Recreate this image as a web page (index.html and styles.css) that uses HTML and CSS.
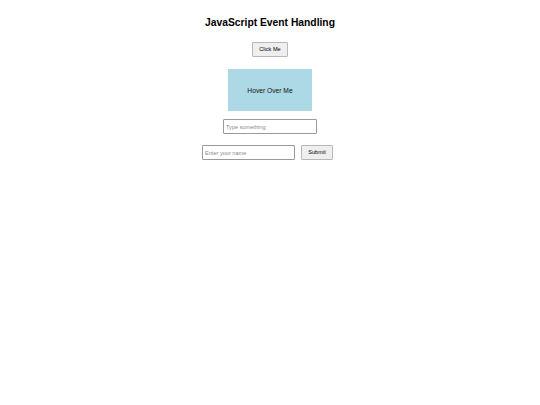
FILE: index.html
```html
<!DOCTYPE html>
<html lang="en">
<head>
<meta charset="utf-8">
<title>JavaScript Event Handling</title>
<link rel="stylesheet" href="styles.css">
</head>
<body>
<main class="page">
  <h1 class="title">JavaScript Event Handling</h1>
  <button class="btn btn-click" type="button">Click Me</button>
  <div class="hover-box">Hover Over Me</div>
  <input class="field field-type" type="text" placeholder="Type something">
  <form class="name-form">
    <input class="field field-name" type="text" placeholder="Enter your name">
    <button class="btn btn-submit" type="submit">Submit</button>
  </form>
</main>
</body>
</html>
```

FILE: styles.css
```css
html, body {
  margin: 0;
  padding: 0;
  background: #ffffff;
}

body {
  font-family: "Liberation Sans", Arial, sans-serif;
  color: #000;
}

.page {
  display: flex;
  flex-direction: column;
  align-items: center;
  padding-top: 14px;
}

.title {
  margin: 0;
  font-size: 10.3px;
  line-height: 18px;
  font-weight: bold;
}

.btn {
  font-family: "Liberation Sans", Arial, sans-serif;
  font-size: 5.6px;
  line-height: 7px;
  color: #000;
  background: #efefef;
  border: 1px solid #b8b8b8;
  border-radius: 1px;
  padding: 0;
  box-sizing: border-box;
  height: 15px;
}

.btn-click {
  margin-top: 10px;
  width: 36px;
}

.hover-box {
  margin-top: 12px;
  width: 84px;
  height: 42px;
  background: #add8e6;
  display: flex;
  align-items: center;
  justify-content: center;
  font-size: 6.7px;
  color: #111;
}

.field {
  font-family: "Liberation Sans", Arial, sans-serif;
  font-size: 5.6px;
  box-sizing: border-box;
  height: 15px;
  padding: 0 0 0 2px;
  border: 1px solid #9a9a9a;
  border-radius: 1px;
  background: #fff;
  outline: none;
}

.field::placeholder {
  color: #8a8a8a;
}

.field-type {
  margin-top: 8px;
  width: 94px;
}

.name-form {
  margin: 11px 0 0 0;
  align-self: stretch;
  display: flex;
  justify-content: center;
  gap: 6px;
  padding-right: 5px;
}

.field-name {
  width: 93px;
}

.btn-submit {
  width: 32px;
}
```
